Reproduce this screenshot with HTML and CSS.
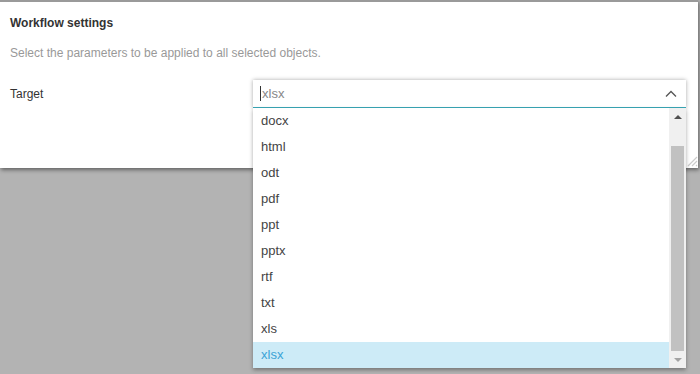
FILE: index.html
```html
<!DOCTYPE html>
<html lang="en">
<head>
  <meta charset="UTF-8" />
  <title>Workflow settings</title>
  <link rel="stylesheet" href="styles.css">
</head>
<body>

  <div class="dialog">
    <h1 class="dialog-title">Workflow settings</h1>
    <p class="dialog-desc">Select the parameters to be applied to all selected objects.</p>

    <div class="field">
      <label class="field-label">Target</label>
      <div class="combo">
        <div class="combo-input">
          <span class="caret"></span><span class="combo-value">xlsx</span>
          <svg class="combo-arrow" width="12" height="8" viewBox="0 0 12 8">
            <path d="M1 6.5 L6 1.5 L11 6.5" fill="none" stroke="#555" stroke-width="1.3"/>
          </svg>
        </div>
        <div class="combo-list">
          <ul class="options">
            <li>docx</li>
            <li>html</li>
            <li>odt</li>
            <li>pdf</li>
            <li>ppt</li>
            <li>pptx</li>
            <li>rtf</li>
            <li>txt</li>
            <li>xls</li>
            <li class="selected">xlsx</li>
          </ul>
          <div class="scrollbar">
            <div class="sb-btn"><span class="tri-up"></span></div>
            <div class="sb-track"><div class="sb-thumb"></div></div>
            <div class="sb-btn"><span class="tri-down"></span></div>
          </div>
        </div>
      </div>
    </div>

    <svg class="resize" width="12" height="12" viewBox="0 0 12 12">
      <path d="M11 2 L2 11 M11 6 L6 11 M11 10 L10 11" stroke="#ccc" stroke-width="1.2"/>
    </svg>
  </div>

</body>
</html>
```

FILE: styles.css
```css
* {
  box-sizing: border-box;
}
body {
  margin: 0;
  font-family: "Liberation Sans", Arial, sans-serif;
  background: #b3b3b3;
  height: 374px;
  overflow: hidden;
}

/* Dialog */
.dialog {
  position: relative;
  width: 698px;
  height: 168px;
  background: #fff;
  border-top: 2px solid #9a9a9a;
  padding: 0 10px;
  box-shadow: 1px 2px 4px rgba(0, 0, 0, 0.45);
}
.dialog-title {
  margin: 0;
  padding-top: 14px;
  font-size: 12px;
  font-weight: bold;
  color: #333;
  line-height: 14px;
}
.dialog-desc {
  margin: 16px 0 0;
  font-size: 12px;
  color: #999;
  line-height: 14px;
}

.field {
  display: flex;
  margin-top: 20px;
}
.field-label {
  width: 243px;
  padding-top: 7px;
  font-size: 12px;
  color: #333;
}

/* Combobox */
.combo {
  position: relative;
  width: 433px;
}
.combo-input {
  display: flex;
  align-items: center;
  height: 28px;
  padding: 0 9px 0 7px;
  border-bottom: 1px solid #3aa8b8;
  box-shadow: 0 0 4px rgba(0, 0, 0, 0.35);
  font-size: 13px;
  color: #888;
}
.caret {
  width: 1px;
  height: 15px;
  background: #333;
  margin-right: 1px;
}
.combo-value {
  flex: 1;
}

.combo-list {
  position: absolute;
  top: 28px;
  left: 0;
  right: 0;
  display: flex;
  background: #fff;
  box-shadow: 0 2px 4px rgba(0, 0, 0, 0.35);
  z-index: 10;
}
.options {
  flex: 1;
  list-style: none;
  margin: 0;
  padding: 0;
}
.options li {
  height: 26px;
  line-height: 26px;
  padding-left: 8px;
  font-size: 13px;
  color: #444;
}
.options li.selected {
  background: #cdebf7;
  color: #3aa3d6;
}

/* Scrollbar */
.scrollbar {
  width: 17px;
  display: flex;
  flex-direction: column;
  background: #f0f0f0;
}
.sb-btn {
  height: 17px;
  display: flex;
  align-items: center;
  justify-content: center;
}
.tri-up {
  border-left: 4px solid transparent;
  border-right: 4px solid transparent;
  border-bottom: 4px solid #505050;
}
.tri-down {
  border-left: 4px solid transparent;
  border-right: 4px solid transparent;
  border-top: 4px solid #a3a3a3;
}
.sb-track {
  flex: 1;
  padding: 21px 2px 0;
}
.sb-thumb {
  height: 100%;
  background: #c1c1c1;
}

.resize {
  position: absolute;
  right: 0;
  bottom: 1px;
}
```
